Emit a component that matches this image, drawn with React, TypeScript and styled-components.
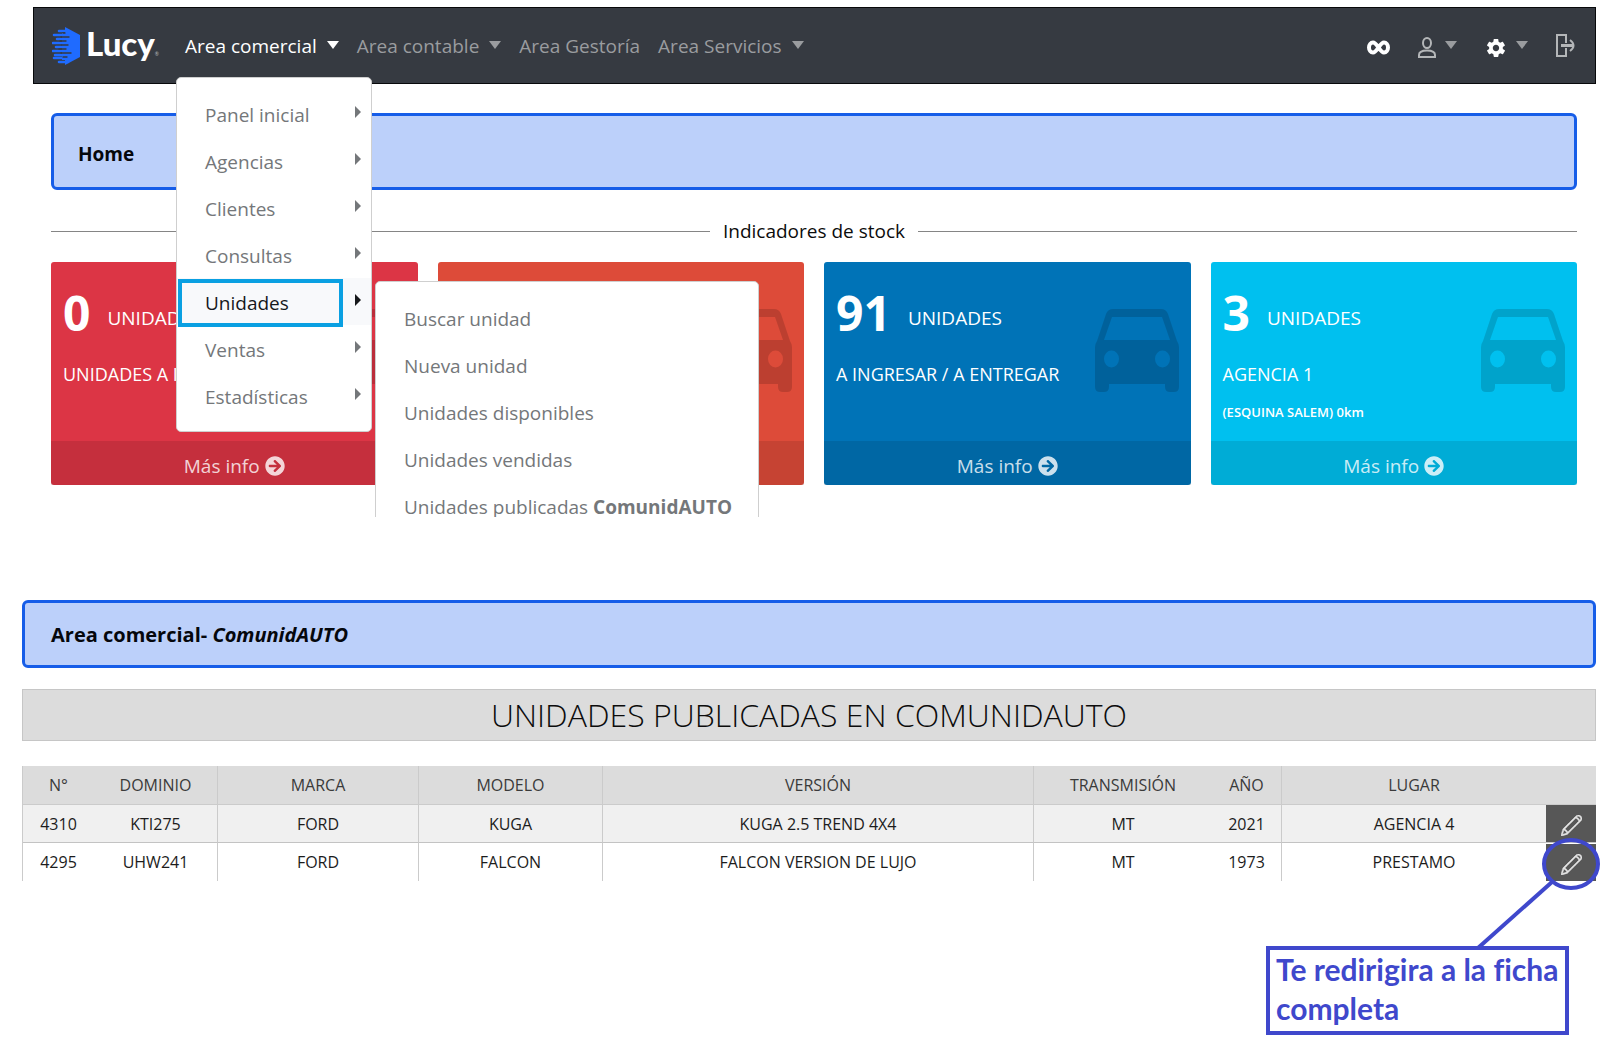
import React from "react";
import styled, { createGlobalStyle, css } from "styled-components";
import { IoMdSettings } from "react-icons/io";
import { FaArrowCircleRight } from "react-icons/fa";
import { SlPencil } from "react-icons/sl";

const sans = `"Open Sans", "Noto Sans", sans-serif`;

const GlobalStyle = createGlobalStyle`
  *, *::before, *::after { box-sizing: border-box; }
  body {
    margin: 0;
    background: #fff;
    color: #0c0c0c;
    font-family: ${sans};
    font-size: 19px;
    line-height: 28px;
  }
  a { color: inherit; text-decoration: none; }
  ul { list-style: none; margin: 0; padding: 0; }
  button { font: inherit; color: inherit; background: none; border: 0; padding: 0; cursor: pointer; }
  h1, h2, h3, p { margin: 0; font: inherit; }
`;

/* ---------- Top panel ---------- */

const Dashboard = styled.section`
  padding: 7px 4px 0 33px;
  overflow: hidden;
`;

const Navbar = styled.header`
  position: relative;
  z-index: 2;
  display: flex;
  align-items: center;
  height: 77px;
  padding: 0 20px 0 18px;
  background: #363a41;
  border: 1px solid #08090b;
`;

const Brand = styled.a`
  display: flex;
  align-items: center;
  gap: 6px;
  width: 133px;
  color: #fff;
`;

const BrandName = styled.span`
  padding-top: 6px;
  font: 900 33px/36px Lato, sans-serif;
  small { font-size: 5px; font-weight: 400; color: #b9bbbe; }
`;

const NavList = styled.ul`
  display: flex;
  gap: 18px;
`;

const NavItem = styled.li`
  position: relative;
`;

const NavButton = styled.button<{ $active?: boolean }>`
  display: flex;
  align-items: center;
  gap: 10px;
  white-space: nowrap;
  color: ${(p) => (p.$active ? "#fff" : "#9a9c9f")};
`;

const Caret = styled.span`
  border: 6px solid transparent;
  border-top: 8px solid currentColor;
  border-bottom: 0;
  margin-bottom: 2px;
`;

const Tools = styled.div`
  display: flex;
  align-items: center;
  gap: 28px;
  margin-left: auto;
`;

const ToolButton = styled.button<{ $bright?: boolean }>`
  display: flex;
  align-items: center;
  gap: 9px;
  padding-top: 4px;
  color: ${(p) => (p.$bright ? "#fff" : "#b4b6b8")};
  &:last-child { padding-top: 0; }
  ${Caret} { color: #9a9c9f; margin-bottom: 6px; }
`;

const menuBox = css`
  position: absolute;
  padding: 12px 0;
  background: #fff;
  border: 1px solid #cfcfcf;
  border-radius: 5px;
`;

const Menu = styled.ul`
  ${menuBox}
  top: calc(100% + 17px);
  left: -9px;
  width: 196px;
`;

const SubMenu = styled.ul`
  ${menuBox}
  top: 3px;
  left: calc(100% + 4px);
  min-width: 384px;
`;

const MenuItem = styled.li<{ $open?: boolean }>`
  position: relative;
  color: ${(p) => (p.$open ? "#16181b" : "#74777a")};
  background: ${(p) => (p.$open ? "#f8f9fb" : "transparent")};
`;

const MenuLink = styled.a`
  display: flex;
  align-items: center;
  justify-content: space-between;
  height: 47px;
  padding: 4px 10px 0 28px;
  white-space: nowrap;
`;

const SideCaret = styled.span`
  border: 6px solid transparent;
  border-left-color: currentColor;
  border-right: 0;
  margin-bottom: 6px;
`;

const Highlight = styled.span`
  position: absolute;
  inset: 1px 28px -2px 1px;
  border: 4px solid #0aa0e2;
  pointer-events: none;
`;

const DashboardBody = styled.div`
  padding: 29px 19px 32px 18px;
`;

const Banner = styled.div<{ $tall?: boolean }>`
  display: flex;
  align-items: center;
  min-height: ${(p) => (p.$tall ? 77 : 68)}px;
  padding: ${(p) => (p.$tall ? "4px 24px 0" : "2px 26px 0")};
  background: #bcd0fa;
  border: 3px solid #165de8;
  border-radius: 6px;
  font-size: ${(p) => (p.$tall ? 19 : 20)}px;
  font-weight: 700;
  color: #05070c;
`;

const Divider = styled.h2`
  display: flex;
  align-items: center;
  gap: 13px;
  margin: 27px 0 17px;
  &::before, &::after { content: ""; flex: 1; border-top: 1px solid #858585; }
`;

const Cards = styled.div`
  display: grid;
  grid-template-columns: repeat(4, 1fr);
  gap: 20px;
`;

const Card = styled.article<{ $color: string }>`
  position: relative;
  display: flex;
  flex-direction: column;
  background: ${(p) => p.$color};
  border-radius: 3px;
  color: #fff;
`;

const CardBody = styled.div`
  min-height: 179px;
  padding: 21px 12px 0;
`;

const Stat = styled.div`
  display: flex;
  align-items: center;
  gap: 17px;
  height: 60px;
  strong { font-size: 48px; line-height: 60px; }
  span { padding-top: 10px; }
`;

const CardLabel = styled.p`
  margin-top: 17px;
  font-size: 18px;
`;

const CardNote = styled.p`
  margin-top: 14px;
  font-size: 13px;
  line-height: 20px;
  font-weight: 600;
`;

const CarSvg = styled.svg`
  position: absolute;
  top: 47px;
  right: 12px;
  width: 84px;
  height: 84px;
  fill: rgba(0, 0, 0, 0.15);
`;

const CardFooter = styled.a`
  display: flex;
  align-items: center;
  justify-content: center;
  gap: 5px;
  height: 44px;
  padding-top: 5px;
  background: rgba(0, 0, 0, 0.1);
  color: rgba(255, 255, 255, 0.8);
`;

/* ---------- Published units ---------- */

const Published = styled.section`
  padding: 83px 4px 0 22px;
`;

const PageTitle = styled.h1`
  margin: 21px 0 25px;
  background: #dcdcdc;
  border: 1px solid #c6c6c6;
  font-size: 32px;
  font-weight: 300;
  line-height: 50px;
  text-align: center;
`;

const TableWrap = styled.div`
  position: relative;
`;

const Table = styled.table`
  width: 100%;
  table-layout: fixed;
  border-spacing: 0;
  border-left: 1px solid #cbcbcb;
  font-size: 16px;
  line-height: 20px;
  text-align: center;
`;

const Row = styled.tr<{ $tone: string }>`
  height: 38px;
  background: ${(p) => p.$tone};
`;

const cell = css<{ $line?: boolean }>`
  padding: 0;
  border-left: ${(p) => (p.$line ? "1px solid #cbcbcb" : "0")};
  font-weight: 400;
  white-space: nowrap;
`;

const HeadCell = styled.th<{ $line?: boolean }>`
  ${cell}
  height: 39px;
  border-bottom: 1px solid #cbcbcb;
  color: #3a3a3a;
`;

const Cell = styled.td<{ $line?: boolean }>`
  ${cell}
  color: #1c1c1c;
  tr:not(:last-child) > & { border-bottom: 1px solid #c3c3c3; }
`;

const EditButton = styled.button`
  display: flex;
  align-items: center;
  justify-content: center;
  width: 100%;
  height: 37px;
  padding-top: 4px;
  background: #575757;
  color: #e4e4e4;
  svg { stroke: currentColor; stroke-width: 24px; }
`;

const Pointer = styled.svg`
  position: absolute;
  top: 64px;
  right: -4px;
  width: 130px;
  height: 118px;
  fill: none;
  stroke: #3f48cc;
  stroke-width: 4px;
  pointer-events: none;
`;

const Callout = styled.p`
  width: 303px;
  min-height: 89px;
  margin: 65px 27px 6px auto;
  padding: 0 6px;
  border: 4px solid #3f48cc;
  color: #3f48cc;
  font: 700 30px/39px Lato, sans-serif;
  font-variant-ligatures: none;
`;

const LogoMark = () => (
  <svg width="28" height="38" viewBox="0 0 28 38" aria-hidden="true">
    <path d="M13 0 L28 8 V30 L13 38 V33 H10 V6 H13 Z" fill="#1f6bff" />
    <g stroke="#1f6bff" strokeWidth="2.6" strokeLinecap="round">
      <path d="M7 4 H16 M2 8 H12 M5 12 H12 M1 16 H12 M4 20 H12 M1 24 H12 M3 28 H12 M2 31 H10 M7 35 H16" />
    </g>
    <g stroke="#363a41" strokeWidth="1.4" strokeLinecap="round">
      <path d="M9 10 H17 M8 14 H14 M10 18 H16 M7 22 H14 M9 26 H19 M11 30 H15 M11 6 H13" />
    </g>
  </svg>
);

const InfinityIcon = () => (
  <svg width="23" height="15" viewBox="0 0 23 15" fill="none" stroke="currentColor" strokeWidth="4" aria-hidden="true">
    <path d="M11.5 7.5 C9.5 4.5 8.2 2.5 6 2.5 A4 5 0 0 0 6 12.5 C8.2 12.5 9.5 10.5 11.5 7.5 C13.5 4.5 14.8 2.5 17 2.5 A4 5 0 0 1 17 12.5 C14.8 12.5 13.5 10.5 11.5 7.5 Z" />
  </svg>
);

const UserIcon = () => (
  <svg width="18" height="21" viewBox="0 0 18 21" fill="none" stroke="currentColor" strokeWidth="2" aria-hidden="true">
    <ellipse cx="9" cy="6" rx="4" ry="5" />
    <path d="M1 20 V18 C1 15 4 13.500 9 13.500 S17 15 17 18 V20 Z" />
  </svg>
);

const ExitIcon = () => (
  <svg width="19" height="23" viewBox="0 0 19 23" fill="none" stroke="currentColor" strokeWidth="2" aria-hidden="true">
    <path d="M10 9 V1 H1 V22 H10 V14" />
    <path d="M5 11.500 H17" strokeWidth="3" />
    <path d="M14 6 C16 7.500 17.500 9 17.500 11.500 S16 15.500 14 17" />
  </svg>
);

const CarIcon = () => (
  <CarSvg viewBox="0 0 84 84" aria-hidden="true">
    <path
      fillRule="evenodd"
      d="M18 0 H66 Q71 0 73 5 L82 32 Q84 35 84 38 V78 Q84 83 79 83 H75 Q70 83 70 78 V75 H14 V78 Q14 83 9 83 H5 Q0 83 0 78 V38 Q0 35 2 32 L11 5 Q13 0 18 0 Z M17 8 L9 31 H75 L67 8 Z M9 50 a7.500 8.500 0 1 0 15 0 a7.500 8.500 0 1 0 -15 0 Z M60 50 a7.500 8.500 0 1 0 15 0 a7.500 8.500 0 1 0 -15 0 Z"
    />
  </CarSvg>
);

const menu = ["Panel inicial", "Agencias", "Clientes", "Consultas", "Unidades", "Ventas", "Estadísticas"];
const subMenu = ["Buscar unidad", "Nueva unidad", "Unidades disponibles", "Unidades vendidas"];

const cards = [
  { color: "#dc3545", count: "0", unit: "UNIDADES", label: "UNIDADES A INGRESAR" },
  { color: "#dd4b39", count: "", unit: "", label: "" },
  { color: "#0073b7", count: "91", unit: "UNIDADES", label: "A INGRESAR / A ENTREGAR" },
  { color: "#00c0ef", count: "3", unit: "UNIDADES", label: "AGENCIA 1", note: "(ESQUINA SALEM) 0km" },
];

const columns = [
  { name: "N°", width: 71 },
  { name: "DOMINIO", width: 123 },
  { name: "MARCA", width: 201, line: true },
  { name: "MODELO", width: 184, line: true },
  { name: "VERSIÓN", width: 431, line: true },
  { name: "TRANSMISIÓN", width: 179, line: true },
  { name: "AÑO", width: 69 },
  { name: "LUGAR", width: 265, line: true },
];

const units = [
  ["4310", "KTI275", "FORD", "KUGA", "KUGA 2.5 TREND 4X4", "MT", "2021", "AGENCIA 4"],
  ["4295", "UHW241", "FORD", "FALCON", "FALCON VERSION DE LUJO", "MT", "1973", "PRESTAMO"],
];

export default function App() {
  return (
    <>
      <GlobalStyle />
      <Dashboard>
        <Navbar>
          <Brand href="#">
            <LogoMark />
            <BrandName>Lucy<small>®</small></BrandName>
          </Brand>
          <nav>
            <NavList>
              <NavItem>
                <NavButton $active>Area comercial<Caret /></NavButton>
                <Menu>
                  {menu.map((name) => {
                    const open = name === "Unidades";
                    return (
                      <MenuItem key={name} $open={open}>
                        <MenuLink href="#">{name}<SideCaret /></MenuLink>
                        {open && (
                          <>
                            <Highlight />
                            <SubMenu>
                              {subMenu.map((entry) => (
                                <MenuItem key={entry}><MenuLink href="#">{entry}</MenuLink></MenuItem>
                              ))}
                              <MenuItem>
                                <MenuLink href="#">
                                  <span>Unidades publicadas <b>ComunidAUTO</b></span>
                                </MenuLink>
                              </MenuItem>
                            </SubMenu>
                          </>
                        )}
                      </MenuItem>
                    );
                  })}
                </Menu>
              </NavItem>
              <NavItem><NavButton>Area contable<Caret /></NavButton></NavItem>
              <NavItem><NavButton>Area Gestoría</NavButton></NavItem>
              <NavItem><NavButton>Area Servicios<Caret /></NavButton></NavItem>
            </NavList>
          </nav>
          <Tools>
            <ToolButton $bright aria-label="Comunidad"><InfinityIcon /></ToolButton>
            <ToolButton aria-label="Usuario"><UserIcon /><Caret /></ToolButton>
            <ToolButton $bright aria-label="Configuración"><IoMdSettings size={22} /><Caret /></ToolButton>
            <ToolButton aria-label="Salir"><ExitIcon /></ToolButton>
          </Tools>
        </Navbar>
        <DashboardBody>
          <Banner $tall>Home</Banner>
          <Divider>Indicadores de stock</Divider>
          <Cards>
            {cards.map((card) => (
              <Card key={card.color} $color={card.color}>
                <CardBody>
                  <Stat><strong>{card.count}</strong><span>{card.unit}</span></Stat>
                  <CardLabel>{card.label}</CardLabel>
                  {card.note && <CardNote>{card.note}</CardNote>}
                </CardBody>
                <CarIcon />
                <CardFooter href="#">Más info<FaArrowCircleRight size={20} /></CardFooter>
              </Card>
            ))}
          </Cards>
        </DashboardBody>
      </Dashboard>

      <Published>
        <Banner><span>Area comercial- <i>ComunidAUTO</i></span></Banner>
        <PageTitle>UNIDADES PUBLICADAS EN COMUNIDAUTO</PageTitle>
        <TableWrap>
          <Table>
            <colgroup>
              {columns.map((c) => <col key={c.name} width={c.width} />)}
              <col width={50} />
            </colgroup>
            <thead>
              <Row $tone="#dcdcdc">
                {columns.map((c) => <HeadCell key={c.name} $line={c.line}>{c.name}</HeadCell>)}
                <HeadCell aria-label="Editar" />
              </Row>
            </thead>
            <tbody>
              {units.map((unit, i) => (
                <Row key={unit[0]} $tone={i % 2 ? "#fff" : "#f0f0f0"}>
                  {unit.map((value, j) => <Cell key={j} $line={columns[j].line}>{value}</Cell>)}
                  <Cell><EditButton aria-label={`Editar ${unit[0]}`}><SlPencil size={21} /></EditButton></Cell>
                </Row>
              ))}
            </tbody>
          </Table>
          <Pointer viewBox="0 0 130 118" aria-hidden="true">
            <ellipse cx="101" cy="34" rx="27" ry="24" />
            <path d="M82 52 L8 118" />
          </Pointer>
        </TableWrap>
        <Callout>Te redirigira a la ficha completa</Callout>
      </Published>
    </>
  );
}
